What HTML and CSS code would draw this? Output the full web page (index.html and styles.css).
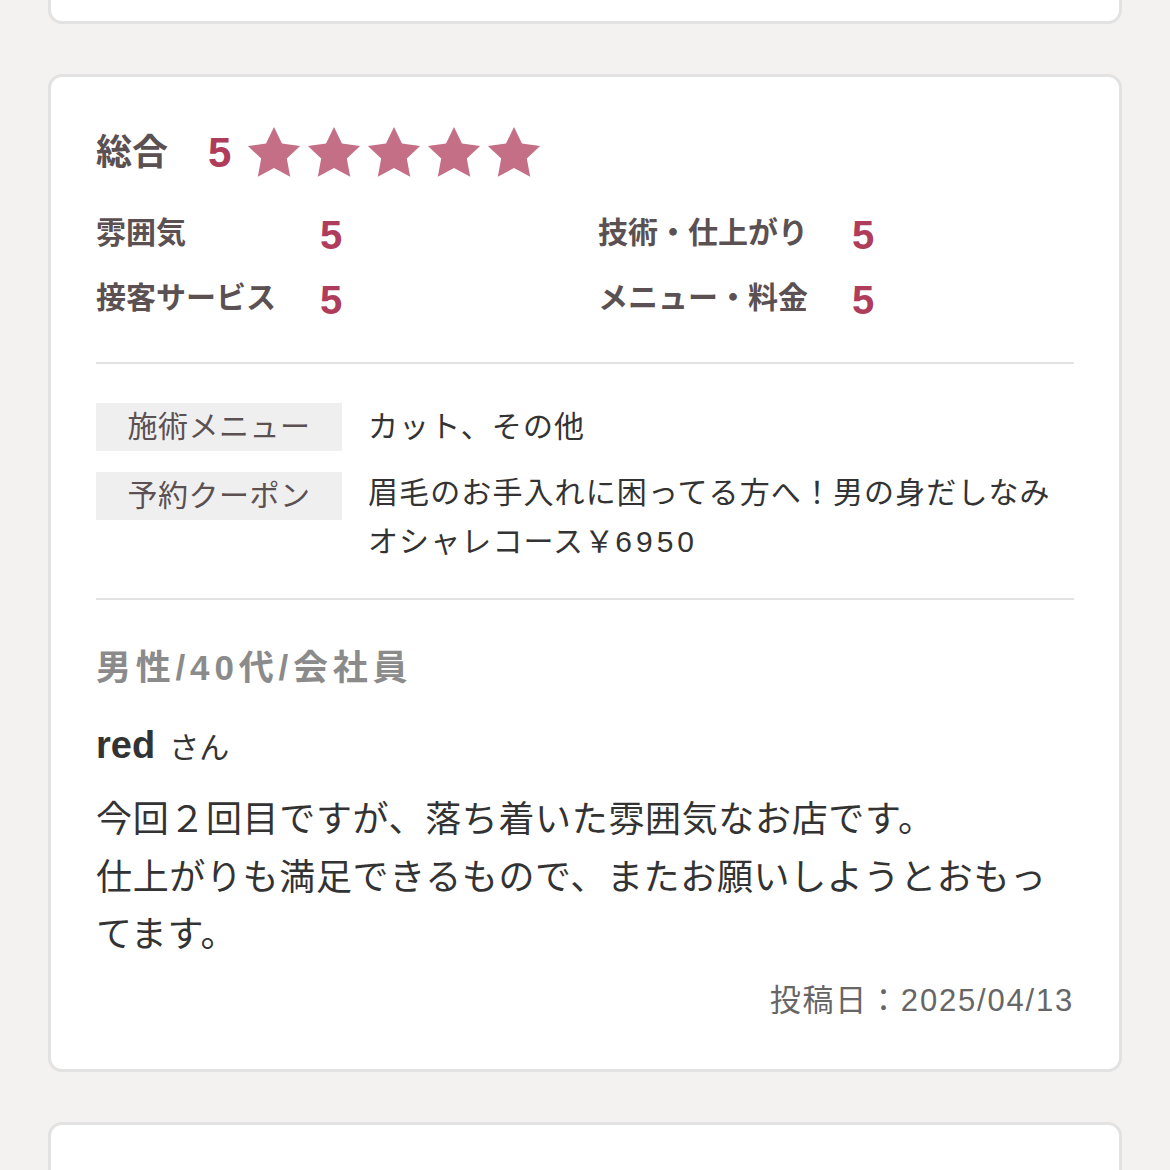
FILE: index.html
```html
<!DOCTYPE html>
<html lang="ja">
<head>
<meta charset="utf-8">
<title>口コミ</title>
<link rel="stylesheet" href="styles.css">
</head>
<body>
<div class="page">
  <div class="card stub"></div>

  <div class="card review">
    <div class="total">
      <span class="total-label">総合</span>
      <span class="total-score">5</span>
      <span class="stars">
        <svg class="star" viewBox="0 0 24 24"><path d="M12 1.2l3.3 6.9 7.5 1-5.5 5.2 1.4 7.5L12 18.2l-6.7 3.6 1.4-7.5L1.2 9.1l7.5-1z"/></svg>
        <svg class="star" viewBox="0 0 24 24"><path d="M12 1.2l3.3 6.9 7.5 1-5.5 5.2 1.4 7.5L12 18.2l-6.7 3.6 1.4-7.5L1.2 9.1l7.5-1z"/></svg>
        <svg class="star" viewBox="0 0 24 24"><path d="M12 1.2l3.3 6.9 7.5 1-5.5 5.2 1.4 7.5L12 18.2l-6.7 3.6 1.4-7.5L1.2 9.1l7.5-1z"/></svg>
        <svg class="star" viewBox="0 0 24 24"><path d="M12 1.2l3.3 6.9 7.5 1-5.5 5.2 1.4 7.5L12 18.2l-6.7 3.6 1.4-7.5L1.2 9.1l7.5-1z"/></svg>
        <svg class="star" viewBox="0 0 24 24"><path d="M12 1.2l3.3 6.9 7.5 1-5.5 5.2 1.4 7.5L12 18.2l-6.7 3.6 1.4-7.5L1.2 9.1l7.5-1z"/></svg>
      </span>
    </div>

    <div class="ratings">
      <div class="rating-col">
        <span class="r-label">雰囲気</span><span class="r-value">5</span>
        <span class="r-label">接客サービス</span><span class="r-value">5</span>
      </div>
      <div class="rating-col">
        <span class="r-label">技術・仕上がり</span><span class="r-value">5</span>
        <span class="r-label">メニュー・料金</span><span class="r-value">5</span>
      </div>
    </div>

    <hr class="divider">

    <div class="info">
      <div class="info-label">施術メニュー</div>
      <div class="info-value">カット、その他</div>
      <div class="info-label">予約クーポン</div>
      <div class="info-value multi">眉毛のお手入れに困ってる方へ！男の身だしなみオシャレコース￥<span class="num">6950</span></div>
    </div>

    <hr class="divider second">

    <div class="profile">男性/40代/会社員</div>
    <div class="author"><span class="name">red</span><span class="san">さん</span></div>
    <p class="comment">今回２回目ですが、落ち着いた雰囲気なお店です。<br>仕上がりも満足できるもので、またお願いしようとおもってます。</p>
    <div class="date">投稿日：2025/04/13</div>
  </div>

  <div class="card next"></div>
</div>
</body>
</html>
```

FILE: styles.css
```css
* { box-sizing: border-box; }

html, body {
  margin: 0;
  padding: 0;
  background: #f3f2f0;
}

body {
  font-family: "Liberation Sans", "Noto Sans CJK JP", sans-serif;
  color: #333;
  overflow: hidden;
  height: 1170px;
}

.page {
  padding: 0 48px;
  display: flex;
  flex-direction: column;
  gap: 50px;
}

.card {
  background: #fff;
  border: 3px solid #e2e2e2;
  border-radius: 14px;
}

.card.stub {
  height: 24px;
  border-top: none;
  border-radius: 0 0 14px 14px;
}

.card.next {
  height: 200px;
}

.review {
  padding: 48px 45px 48px 45px;
}

.total {
  display: flex;
  align-items: center;
  height: 56px;
}

.total-label {
  font-size: 36px;
  font-weight: bold;
  color: #5b5052;
  line-height: 56px;
}

.total-score {
  font-size: 42px;
  font-weight: bold;
  color: #b03c5b;
  margin-left: 40px;
  line-height: 56px;
}

.stars {
  display: flex;
  gap: 2px;
  margin-left: 14px;
}

.star {
  width: 58px;
  height: 58px;
  fill: #c46f86;
  display: block;
}

.ratings {
  display: grid;
  grid-template-columns: 502px 1fr;
  margin-top: 28px;
}

.rating-col {
  display: grid;
  grid-template-columns: auto 1fr;
  column-gap: 44px;
  row-gap: 17px;
  align-items: center;
}

.r-label {
  font-size: 30px;
  font-weight: bold;
  color: #5b5052;
  line-height: 48px;
}

.r-value {
  font-size: 40px;
  font-weight: bold;
  color: #b03c5b;
  line-height: 48px;
  position: relative;
  top: 2px;
}

.divider {
  border: none;
  height: 2px;
  background: #e2e2e2;
  margin: 40px 0 0 0;
}

.divider.second {
  margin-top: 32px;
}

.info {
  display: grid;
  grid-template-columns: 246px 1fr;
  column-gap: 26px;
  row-gap: 21px;
  margin-top: 39px;
  align-items: start;
}

.info-label {
  background: #efefef;
  height: 48px;
  line-height: 48px;
  text-align: center;
  font-size: 30px;
  color: #5b5052;
  letter-spacing: 0.5px;
}

.info-value {
  font-size: 30px;
  line-height: 48px;
  color: #333;
  letter-spacing: 1.1px;
}

.info-value.multi {
  line-height: 49px;
  margin-top: -4px;
}

.num {
  letter-spacing: 4px;
}

.profile {
  margin-top: 44px;
  font-size: 35px;
  font-weight: bold;
  color: #8b8b8b;
  line-height: 48px;
  letter-spacing: 4.8px;
}

.author {
  margin-top: 29px;
  line-height: 48px;
}

.name {
  font-size: 38px;
  font-weight: bold;
  color: #333;
}

.san {
  font-size: 30px;
  color: #333;
  margin-left: 14px;
}

.comment {
  margin: 14px 0 0 0;
  font-size: 36px;
  line-height: 57.5px;
  letter-spacing: 0.65px;
  color: #333;
}

.date {
  margin-top: 17px;
  text-align: right;
  font-size: 31px;
  line-height: 40px;
  letter-spacing: 1.8px;
  color: #666;
}
```
